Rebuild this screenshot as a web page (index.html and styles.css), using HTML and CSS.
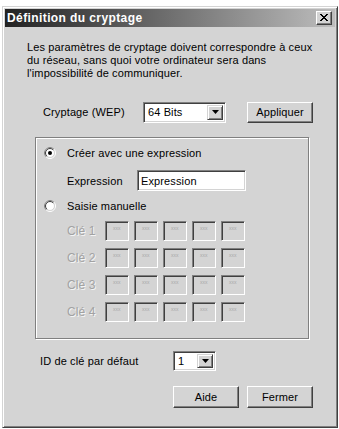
FILE: index.html
```html
<!DOCTYPE html>
<html lang="fr">
<head>
<meta charset="utf-8">
<title>Définition du cryptage</title>
<link rel="stylesheet" href="styles.css">
</head>
<body>
<div class="window">
  <div class="titlebar">
    <span class="title">Définition du cryptage</span>
    <span class="close">
      <svg width="8" height="7" viewBox="0 0 8 7"><path d="M0 0h2v1h1v1h2v-1h1v-1h2v1h-1v1h-1v1h-1v1h1v1h1v1h1v1h-2v-1h-1v-1h-2v1h-1v1h-2v-1h1v-1h1v-1h1v-1h-1v-1h-1v-1h-1z" fill="#000"/></svg>
    </span>
  </div>
  <div class="content">
    <p class="intro">Les paramètres de cryptage doivent correspondre à ceux<br>du réseau, sans quoi votre ordinateur sera dans<br>l'impossibilité de communiquer.</p>

    <div class="wep-row">
      <span class="wep-label">Cryptage (WEP)</span>
      <div class="combo combo-wep">
        <span class="combo-value">64 Bits</span>
        <span class="combo-btn"><svg width="7" height="4" viewBox="0 0 7 4"><path d="M0 0h7L3.5 4z" fill="#000"/></svg></span>
      </div>
      <button class="btn btn-apply">Appliquer</button>
    </div>

    <div class="group">
      <div class="radio-row radio-first">
        <span class="radio">
          <svg width="12" height="12" viewBox="0 0 12 12">
            <circle cx="6" cy="6" r="5.5" fill="none" stroke="#fff"/>
            <path d="M2.1 9.9A5.5 5.5 0 0 1 9.9 2.1" fill="none" stroke="#808080"/>
            <circle cx="6" cy="6" r="4.5" fill="#fff" stroke="#d4d4d4"/>
            <path d="M2.8 9.2A4.5 4.5 0 0 1 9.2 2.8" fill="none" stroke="#404040"/>
            <circle cx="6" cy="6" r="2" fill="#000"/>
          </svg>
        </span>
        <span class="radio-label">Créer avec une expression</span>
      </div>
      <div class="expr-row">
        <span class="expr-label">Expression</span>
        <div class="textbox">Expression</div>
      </div>
      <div class="radio-row radio-second">
        <span class="radio">
          <svg width="12" height="12" viewBox="0 0 12 12">
            <circle cx="6" cy="6" r="5.5" fill="none" stroke="#fff"/>
            <path d="M2.1 9.9A5.5 5.5 0 0 1 9.9 2.1" fill="none" stroke="#808080"/>
            <circle cx="6" cy="6" r="4.5" fill="#fff" stroke="#d4d4d4"/>
            <path d="M2.8 9.2A4.5 4.5 0 0 1 9.2 2.8" fill="none" stroke="#404040"/>
          </svg>
        </span>
        <span class="radio-label">Saisie manuelle</span>
      </div>
      <div class="keys">
        <div class="key-row">
          <span class="key-label">Clé 1</span>
          <span class="keybox">xxx</span><span class="keybox">xxx</span><span class="keybox">xxx</span><span class="keybox">xxx</span><span class="keybox">xxx</span>
        </div>
        <div class="key-row">
          <span class="key-label">Clé 2</span>
          <span class="keybox">xxx</span><span class="keybox">xxx</span><span class="keybox">xxx</span><span class="keybox">xxx</span><span class="keybox">xxx</span>
        </div>
        <div class="key-row">
          <span class="key-label">Clé 3</span>
          <span class="keybox">xxx</span><span class="keybox">xxx</span><span class="keybox">xxx</span><span class="keybox">xxx</span><span class="keybox">xxx</span>
        </div>
        <div class="key-row">
          <span class="key-label">Clé 4</span>
          <span class="keybox">xxx</span><span class="keybox">xxx</span><span class="keybox">xxx</span><span class="keybox">xxx</span><span class="keybox">xxx</span>
        </div>
      </div>
    </div>

    <div class="id-row">
      <span class="id-label">ID de clé par défaut</span>
      <div class="combo combo-id">
        <span class="combo-value">1</span>
        <span class="combo-btn"><svg width="7" height="4" viewBox="0 0 7 4"><path d="M0 0h7L3.5 4z" fill="#000"/></svg></span>
      </div>
    </div>

    <div class="buttons">
      <button class="btn btn-foot">Aide</button>
      <button class="btn btn-foot">Fermer</button>
    </div>
  </div>
</div>
</body>
</html>
```

FILE: styles.css
```css
* { box-sizing: border-box; }

html, body {
  margin: 0;
  padding: 0;
  background: #ffffff;
}

body {
  font-family: "Liberation Sans", Arial, sans-serif;
  font-size: 11px;
  letter-spacing: 0.12px;
  color: #000;
}

.window {
  margin: 6px 0 0 2px;
  width: 336px;
  height: 422px;
  background: #d4d4d4;
  border: 1px solid;
  border-color: #d4d4d4 #404040 #404040 #d4d4d4;
  box-shadow: inset 1px 1px #fff, inset -1px -1px #808080;
  padding: 2px;
  display: flex;
  flex-direction: column;
}

.titlebar {
  height: 18px;
  background: linear-gradient(to right, #222222, #bdbdbd);
  display: flex;
  align-items: center;
  justify-content: space-between;
  padding: 0 3px 0 2px;
}

.title {
  color: #fff;
  font-weight: bold;
  font-size: 12px;
  letter-spacing: 0.4px;
}

.close {
  width: 16px;
  height: 14px;
  background: #d4d4d4;
  border: 1px solid;
  border-color: #fff #404040 #404040 #fff;
  box-shadow: inset -1px -1px #808080;
  display: flex;
  align-items: center;
  justify-content: center;
  padding-bottom: 1px;
}
.close svg { display: block; }

.content {
  display: flex;
  flex-direction: column;
}

.intro {
  margin: 14px 0 0 22px;
  line-height: 13px;
  white-space: nowrap;
}

.wep-row {
  display: flex;
  align-items: center;
  margin: 21px 0 0 38px;
  height: 22px;
}

.wep-label {
  width: 100px;
}

.combo {
  height: 21px;
  background: #fff;
  border: 1px solid;
  border-color: #808080 #fff #fff #808080;
  box-shadow: inset 1px 1px #404040, inset -1px -1px #d4d4d4;
  padding: 2px;
  display: flex;
  align-items: stretch;
}

.combo-value {
  flex: 1;
  padding-left: 2px;
  line-height: 15px;
}

.combo-btn {
  width: 16px;
  background: #d4d4d4;
  border: 1px solid;
  border-color: #d4d4d4 #404040 #404040 #d4d4d4;
  box-shadow: inset 1px 1px #fff, inset -1px -1px #808080;
  display: flex;
  align-items: center;
  justify-content: center;
}
.combo-btn svg { display: block; }

.combo-wep { width: 83px; }

.btn {
  font-family: "Liberation Sans", Arial, sans-serif;
  font-size: 11px;
  letter-spacing: 0.12px;
  color: #000;
  background: #d4d4d4;
  border: 1px solid;
  border-color: #fff #404040 #404040 #fff;
  box-shadow: inset -1px -1px #808080;
  padding: 0;
  height: 21px;
}

.btn-apply {
  width: 66px;
  margin-left: 21px;
}

.group {
  margin: 14px 0 0 30px;
  width: 274px;
  height: 202px;
  border: 1px solid #808080;
  box-shadow: inset 1px 1px #fff, 1px 1px #fff;
  display: flex;
  flex-direction: column;
  padding-left: 8px;
}

.radio-row {
  display: flex;
  align-items: center;
  height: 13px;
}
.radio { width: 12px; height: 12px; display: block; }
.radio svg { display: block; }
.radio-label { margin-left: 11px; }

.radio-first { margin-top: 8px; }

.expr-row {
  display: flex;
  align-items: center;
  margin: 11px 0 0 23px;
  height: 21px;
}
.expr-label { width: 70px; }

.textbox {
  width: 109px;
  height: 21px;
  background: #fff;
  border: 1px solid;
  border-color: #808080 #fff #fff #808080;
  box-shadow: inset 1px 1px #404040, inset -1px -1px #d4d4d4;
  padding: 3px 0 0 3px;
  line-height: 14px;
}

.radio-second { margin-top: 8px; }

.keys {
  display: flex;
  flex-direction: column;
  gap: 7px;
  margin: 9px 0 0 23px;
}

.key-row {
  display: flex;
  align-items: center;
  height: 20px;
}

.key-label {
  width: 38px;
  color: #a2a2a2;
  text-shadow: 1px 1px #f4f4f4;
  font-size: 12px;
}

.keybox {
  width: 24px;
  height: 20px;
  margin-right: 5px;
  border: 1px solid;
  border-color: #808080 #fff #fff #808080;
  box-shadow: inset 1px 1px #404040, inset -1px -1px #d4d4d4;
  background: #d4d4d4;
  font-size: 5px;
  letter-spacing: 0;
  color: #a8a8a8;
  padding: 3px 0 0 7px;
  line-height: 6px;
}

.id-row {
  display: flex;
  align-items: center;
  margin: 12px 0 0 35px;
  height: 20px;
}
.id-label { width: 133px; }
.combo-id { width: 43px; height: 20px; }

.buttons {
  display: flex;
  gap: 8px;
  margin: 15px 0 0 168px;
}
.btn-foot { width: 66px; height: 22px; }
```
